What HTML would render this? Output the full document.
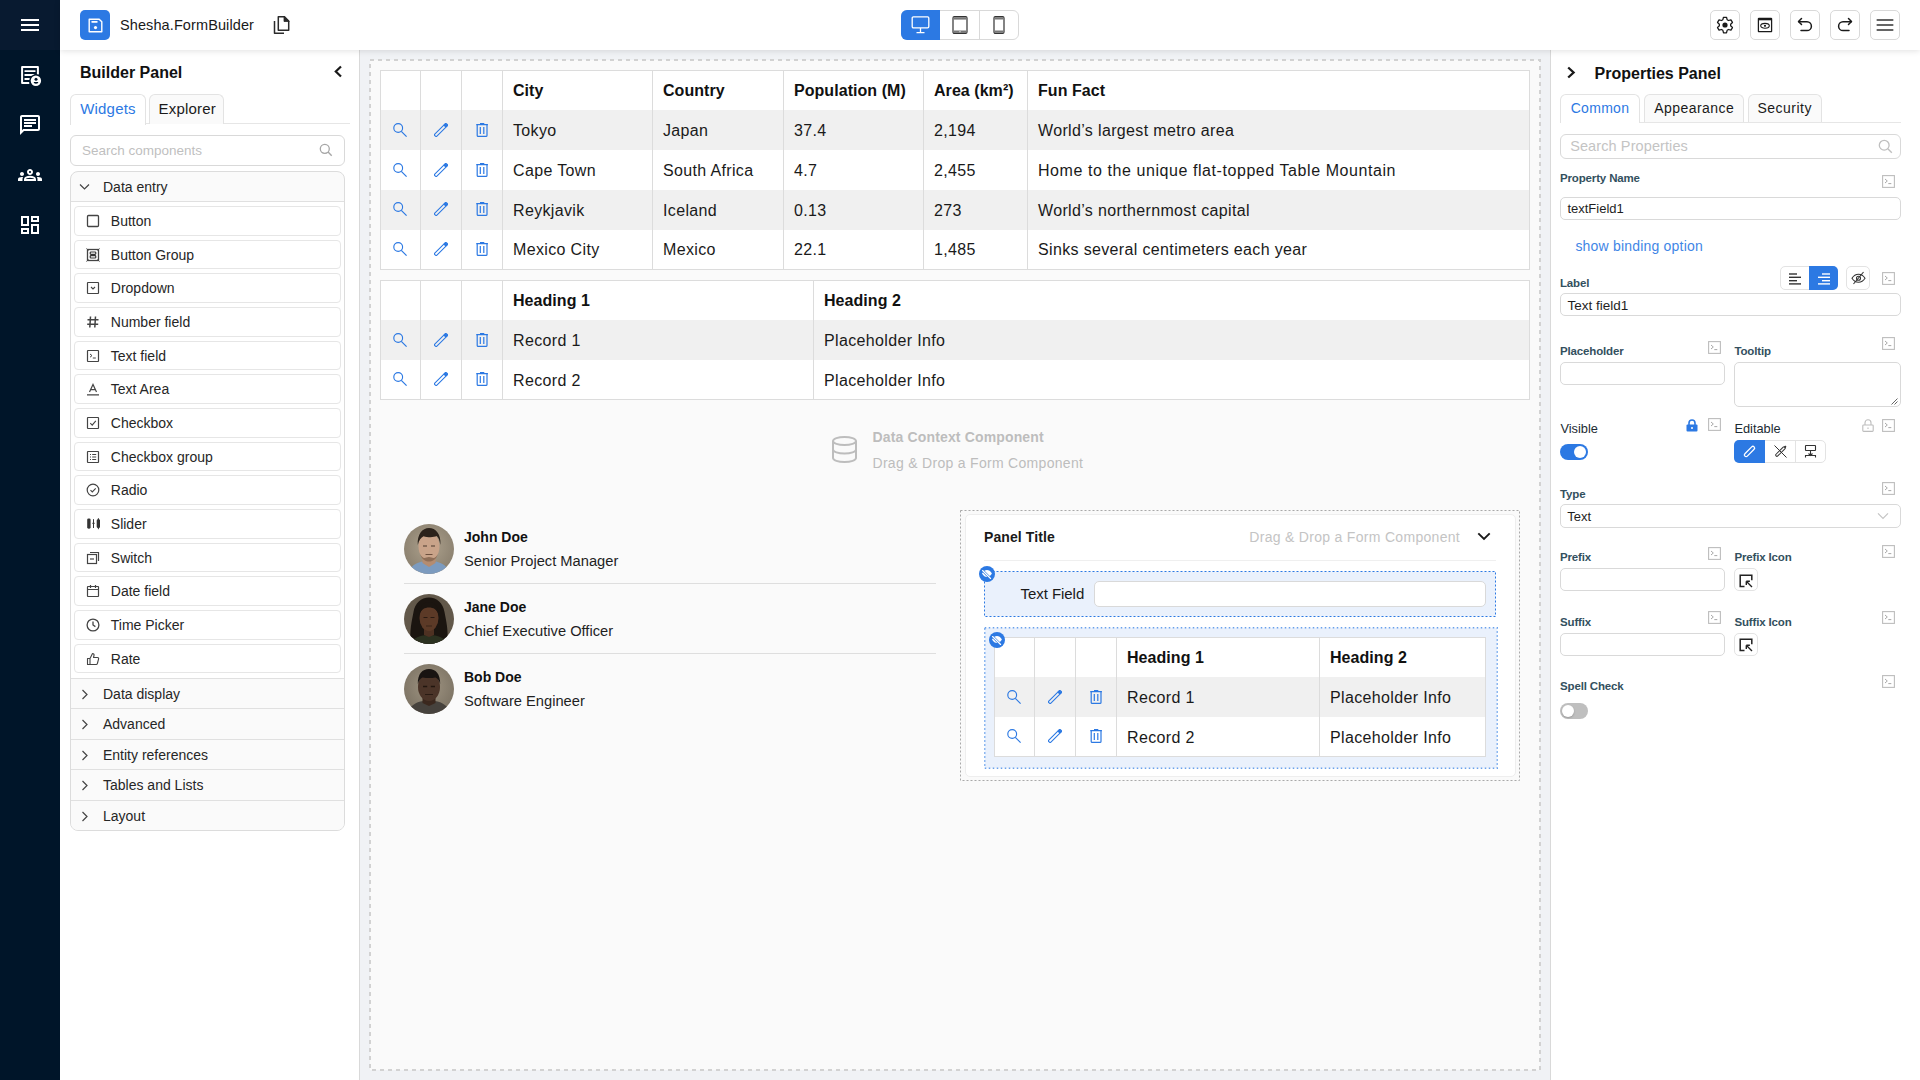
<!DOCTYPE html>
<html><head><meta charset="utf-8">
<style>
*{box-sizing:border-box;margin:0;padding:0}
html,body{width:1920px;height:1080px;overflow:hidden;background:#fff;font-family:"Liberation Sans",sans-serif;color:#1f1f1f}
.abs{position:absolute}
svg{display:block}
/* nav */
#nav{position:absolute;left:0;top:0;width:60px;height:1080px;background:#001529}
#navtop{position:absolute;left:0;top:0;width:60px;height:50px;background:#081a30}
/* header */
#hdr{position:absolute;left:60px;top:0;width:1860px;height:50px;background:#fff;z-index:5;box-shadow:0 1px 6px rgba(0,0,0,0.12)}
.tb{position:absolute;top:10px;width:30px;height:30px;border:1px solid #d9d9d9;border-radius:5px;background:#fff}
.tb svg{position:absolute;left:50%;top:50%;transform:translate(-50%,-50%)}
/* builder */
#bp{position:absolute;left:60px;top:50px;width:300px;height:1030px;background:#fff;border-right:1px solid #d9d9d9}
.tab{position:absolute;top:44px;height:30px;border:1px solid #e3e3e3;border-bottom:none;border-radius:6px 6px 0 0;background:#fafafa;font-size:15px;line-height:28px;padding-left:10px}
.item{position:absolute;left:14px;width:267px;height:29.66px;border:1px solid #e6e6e6;border-radius:4px;background:#fff;font-size:14px;line-height:28.2px;padding-left:36.3px;color:#262626}
.item svg{position:absolute;left:11.3px;top:7px}
.grp{position:absolute;left:10px;width:275px;height:31px;border-top:1px solid #e0e0e0;font-size:14px;line-height:30px;padding-left:32px;color:#262626;background:#fafafa}
.grp svg{position:absolute;left:10px;top:10px}
/* canvas */
#cv{position:absolute;left:360px;top:50px;width:1190px;height:1030px;background:#f0f2f5}
#dz{position:absolute;left:10px;top:10px;width:1170px;height:1010px;border:2px dashed #d3d3d3;background:#fafafa}
table.t{position:absolute;border-collapse:collapse;background:#fff;font-size:16px;letter-spacing:0.35px;border:1px solid #dcdcdc}
table.t td,table.t th{border-style:solid;border-color:#dcdcdc;border-width:0 1px;height:39.8px;padding:2px 0 0 10px;text-align:left;white-space:nowrap;color:#1a1a1a}
table.t th{font-weight:bold;letter-spacing:0.05px;color:#111;padding-top:0.4px}
table.t tr.s td{background:#f0f0f0}
table.t td.ic{padding:0;text-align:center}
table.t td.ic svg{margin:0 auto;position:relative;top:-0.4px}
table.t td.ic:nth-child(1) svg{left:-1px}
table.t td.ic:nth-child(3) svg{left:0.7px}
/* props */
#pp{position:absolute;left:1550px;top:50px;width:370px;height:1030px;background:#fff;border-left:1px solid #d9d9d9}
.lbl{position:absolute;font-size:12px;font-weight:bold;color:#3b4d5c;letter-spacing:-0.2px}
.inp{position:absolute;border:1px solid #d9d9d9;border-radius:4px;background:#fff}
.ex{position:absolute;width:13px;height:13px;border:1px solid #c4c4c4;border-radius:1px}
.ex:after{content:"";position:absolute;left:2px;top:3px;width:3px;height:3px;border-right:1px solid #9a9a9a;border-bottom:1px solid #9a9a9a;transform:rotate(-45deg)}
.ex:before{content:"";position:absolute;left:6px;top:8px;width:4px;height:1px;background:#9a9a9a}
</style></head>
<body>
<div id="nav">
  <div id="navtop"></div>
  <svg class="abs" style="left:18px;top:13px" width="24" height="24" viewBox="0 0 24 24" fill="#fff"><path d="M3 18h18v-2H3v2zm0-5h18v-2H3v2zm0-7v2h18V6H3z"/></svg>
  <svg class="abs" style="left:18px;top:63px" width="24" height="24" viewBox="0 0 24 24"><path d="M11.3 19.9H4.1V3.9h15.8v7.6" fill="none" stroke="#fff" stroke-width="2" stroke-linejoin="round"/><path d="M7.2 8.1h9.6M7.2 12h8.4M7.2 16h4" stroke="#fff" stroke-width="1.8" stroke-linecap="round"/><circle cx="17.9" cy="17.75" r="6.6" fill="#001529"/><circle cx="17.9" cy="17.75" r="5.2" fill="#fff"/><circle cx="18" cy="16.2" r="1.5" fill="#001529"/><path d="M15.6 19.1h4.8a2.4 1.6 0 0 1-4.8 0z" fill="#001529"/></svg>
  <svg class="abs" style="left:18px;top:113px" width="24" height="24" viewBox="0 0 24 24" fill="#fff"><path d="M20 2H4c-1.1 0-1.99.9-1.99 2L2 22l4-4h14c1.1 0 2-.9 2-2V4c0-1.1-.9-2-2-2zm0 14H5.17L4 17.17V4h16v12zM6 12h8v2H6zm0-3h12v2H6zm0-3h12v2H6z"/></svg>
  <svg class="abs" style="left:18px;top:163px" width="24" height="24" viewBox="0 0 24 24" fill="#fff"><path d="M4 13c1.1 0 2-.9 2-2s-.9-2-2-2-2 .9-2 2 .9 2 2 2zm1.13 1.1c-.37-.06-.74-.1-1.13-.1-.99 0-1.93.21-2.78.58C.48 14.9 0 15.62 0 16.43V18h4.5v-1.61c0-.83.23-1.61.63-2.29zM20 13c1.1 0 2-.9 2-2s-.9-2-2-2-2 .9-2 2 .9 2 2 2zm4 3.43c0-.81-.48-1.53-1.22-1.85-.85-.37-1.79-.58-2.78-.58-.39 0-.76.04-1.13.1.4.68.63 1.46.63 2.29V18H24v-1.57zm-7.76-2.78c-1.17-.52-2.61-.9-4.240-.9-1.63 0-3.07.39-4.24.9C6.68 14.13 6 15.21 6 16.39V18h12v-1.61c0-1.18-.68-2.26-1.76-2.74zM8.07 16c.09-.23.13-.39.91-.69.97-.38 1.99-.56 3.02-.56s2.05.18 3.02.56c.77.3.81.46.91.69H8.07zM12 8c.55 0 1 .45 1 1s-.45 1-1 1-1-.45-1-1 .45-1 1-1m0-2c-1.66 0-3 1.34-3 3s1.34 3 3 3 3-1.34 3-3-1.34-3-3-3z"/></svg>
  <svg class="abs" style="left:18px;top:213px" width="24" height="24" viewBox="0 0 24 24" fill="#fff"><path d="M19 5v2h-4V5h4M9 5v6H5V5h4m10 8v6h-4v-6h4M9 17v2H5v-2h4M21 3h-8v6h8V3zM11 3H3v10h8V3zm10 8h-8v10h8V11zm-10 4H3v6h8v-6z"/></svg>
</div>
<div id="hdr">
  <div class="abs" style="left:20px;top:10px;width:30px;height:30px;background:#2c79e3;border-radius:5px">
    <svg class="abs" style="left:7.5px;top:7.5px" width="15" height="15" viewBox="0 0 15 15" fill="none" stroke="#fff" stroke-width="1.4"><path d="M1.2 1.2h10l2.6 2.6v10H1.2z" stroke-linejoin="round"/><rect x="3.5" y="3" width="6" height="1.8" fill="#fff" stroke="none" rx=".4"/><circle cx="7.5" cy="9.6" r="1.6" fill="#fff" stroke="none"/></svg>
  </div>
  <div class="abs" style="left:60px;top:16px;font-size:14.5px;line-height:18px;color:#1a1a1a;letter-spacing:0.1px">Shesha.FormBuilder</div>
  <svg class="abs" style="left:213px;top:15px" width="18" height="20" viewBox="0 0 18 20" fill="none" stroke="#2a2a2a" stroke-width="1.5" stroke-linejoin="round"><path d="M5.3 1.8h6.2l4.2 4.2v9.2H5.3z"/><path d="M11 1.3v5.2h5.2z" fill="#2a2a2a" stroke-width="0.8"/><path d="M1.5 6v12.3h9.5"/></svg>
  <!-- device toggle -->
  <div class="abs" style="left:841px;top:10px;width:118px;height:30px;border:1px solid #d9d9d9;border-radius:6px;background:#fff"></div>
  <div class="abs" style="left:841px;top:10px;width:39px;height:30px;background:#2c79e3;border-radius:6px 0 0 6px"></div>
  <div class="abs" style="left:919px;top:10px;width:1px;height:30px;background:#d9d9d9"></div>
  <svg class="abs" style="left:851px;top:16px" width="19" height="18" viewBox="0 0 19 18" fill="none" stroke="#fff" stroke-width="1.3"><rect x="1.2" y="0.8" width="16.6" height="11" rx="1.2"/><path d="M9.5 12v4.2M5.5 16.6h8"/></svg>
  <svg class="abs" style="left:892px;top:16px" width="16" height="18" viewBox="0 0 16 18"><rect x="1" y="0.6" width="14" height="16.8" rx="1.3" fill="none" stroke="#333" stroke-width="1.2"/><rect x="1.5" y="1.2" width="13" height="2.4" fill="#777"/><rect x="1.5" y="14.5" width="13" height="2.4" fill="#777"/><circle cx="8" cy="15.7" r=".6" fill="#fff"/></svg>
  <svg class="abs" style="left:933px;top:16px" width="12" height="18" viewBox="0 0 12 18"><rect x="1" y="0.6" width="10" height="16.8" rx="1.3" fill="none" stroke="#333" stroke-width="1.2"/><rect x="1.5" y="1.2" width="9" height="2.3" fill="#777"/><rect x="1.5" y="14.5" width="9" height="2.3" fill="#777"/></svg>
  <!-- right toolbar -->
  <div class="tb" style="left:1650px"><svg width="18" height="18" viewBox="0 0 18 18"><path d="M6.86 3.72 L7.49 1.25 L10.51 1.25 L11.14 3.72 L12.51 4.51 L14.96 3.82 L16.47 6.43 L14.64 8.21 L14.64 9.79 L16.47 11.57 L14.96 14.18 L12.51 13.49 L11.14 14.28 L10.51 16.75 L7.49 16.75 L6.86 14.28 L5.49 13.49 L3.04 14.18 L1.53 11.57 L3.36 9.79 L3.36 8.21 L1.53 6.43 L3.04 3.82 L5.49 4.51Z" fill="none" stroke="#1a1a1a" stroke-width="1.25" stroke-linejoin="round"/><circle cx="9" cy="9" r="2.6" fill="#1a1a1a"/></svg></div>
  <div class="tb" style="left:1690px"><svg width="15" height="15" viewBox="0 0 15 15"><rect x=".8" y=".8" width="13.4" height="13.4" rx=".8" fill="none" stroke="#1a1a1a" stroke-width="1.5"/><rect x=".8" y=".8" width="13.4" height="2" fill="#1a1a1a"/><ellipse cx="7.5" cy="8.3" rx="4.3" ry="2.4" fill="none" stroke="#1a1a1a" stroke-width="1.1"/><circle cx="7.5" cy="8.3" r="1.1" fill="#1a1a1a"/></svg></div>
  <div class="tb" style="left:1730px"><svg width="16" height="16" viewBox="0 0 16 16" fill="none" stroke="#1a1a1a" stroke-width="1.5" stroke-linecap="round" stroke-linejoin="round"><path d="M4.5 1.5L1.5 4.5l3 3"/><path d="M1.8 4.8H10a4.4 4.4 0 0 1 0 8.8H4"/></svg></div>
  <div class="tb" style="left:1770px"><svg width="16" height="16" viewBox="0 0 16 16" fill="none" stroke="#1a1a1a" stroke-width="1.5" stroke-linecap="round" stroke-linejoin="round"><path d="M11.5 1.5l3 3-3 3"/><path d="M14.2 4.8H6a4.4 4.4 0 0 0 0 8.8h6"/></svg></div>
  <div class="tb" style="left:1810px"><svg width="18" height="14" viewBox="0 0 18 14" fill="#333"><rect x=".5" y="1.2" width="17" height="1.5" rx=".6"/><rect x=".5" y="6.2" width="17" height="1.5" rx=".6"/><rect x=".5" y="11.2" width="17" height="1.5" rx=".6"/></svg></div>
</div>
<div id="bp">
<div class="abs" style="left:20px;top:14px;font-size:16px;font-weight:bold;line-height:18px;color:#111">Builder Panel</div>
<svg class="abs" style="left:273px;top:15.2px" width="10" height="13" viewBox="0 0 10 13"><path d="M8 1.5L2.8 6.5 8 11.5" fill="none" stroke="#1a1a1a" stroke-width="2.2"/></svg>
<div class="abs" style="left:10px;top:73px;width:280px;height:1px;background:#e6e6e6"></div>
<div class="tab" style="left:10px;width:75.7px;background:#fff;color:#2c79e3;height:31px;padding-left:9.2px;letter-spacing:0.2px">Widgets</div>
<div class="tab" style="left:88.5px;width:75.1px;color:#1a1a1a;padding-left:9px;letter-spacing:0.2px">Explorer</div>
<div class="abs" style="left:10px;top:84.5px;width:275px;height:31px;border:1px solid #d9d9d9;border-radius:6px;background:#fff"></div>
<div class="abs" style="left:22px;top:93px;font-size:13.5px;line-height:16px;color:#bfbfbf">Search components</div>
<svg class="abs" style="left:259px;top:93px" width="14" height="14" viewBox="0 0 14 14"><circle cx="5.8" cy="5.8" r="4.5" fill="none" stroke="#a6a6a6" stroke-width="1.3"/><path d="M9.1 9.1l3.6 3.6" stroke="#a6a6a6" stroke-width="1.4"/></svg>
<div class="abs" style="left:10px;top:120.5px;width:275px;height:660px;border:1px solid #dcdcdc;border-radius:8px;background:#fafafa;overflow:hidden">
<div class="abs" style="left:0;top:0;width:275px;height:30px;"></div>
<svg class="abs" style="left:8px;top:11px" width="11" height="8" viewBox="0 0 11 8"><path d="M1 1.5l4.5 4.5L10 1.5" fill="none" stroke="#444" stroke-width="1.2"/></svg>
<div class="abs" style="left:32px;top:7px;font-size:14px;line-height:16px;color:#262626">Data entry</div>
<div class="abs" style="left:0;top:29.5px;width:275px;height:476.5px;background:#fff;border-top:1px solid #e0e0e0"></div>
<div class="item" style="left:2.5px;top:34.50px">Button<svg width="14" height="14" viewBox="0 0 14 14" style="left:11.3px;top:7px"><rect x="1.5" y="1.5" width="11" height="11" rx="1" fill="none" stroke="#444" stroke-width="1.3"/></svg></div>
<div class="item" style="left:2.5px;top:68.16px">Button Group<svg width="14" height="14" viewBox="0 0 14 14" style="left:11.3px;top:7px"><rect x="1.5" y="1.5" width="11" height="11" fill="none" stroke="#444" stroke-width="1.3"/><rect x="4.2" y="4" width="5.6" height="2.3" rx=".8" fill="none" stroke="#333" stroke-width="1.2"/><rect x="4.2" y="7.7" width="5.6" height="2.3" rx=".8" fill="none" stroke="#333" stroke-width="1.2"/><path d="M.5 .5l2 2M13.5 .5l-2 2M.5 13.5l2-2M13.5 13.5l-2-2" stroke="#444" stroke-width="1"/></svg></div>
<div class="item" style="left:2.5px;top:101.82px">Dropdown<svg width="14" height="14" viewBox="0 0 14 14" style="left:11.3px;top:7px"><rect x="1.5" y="1.5" width="11" height="11" rx=".5" fill="none" stroke="#444" stroke-width="1.2"/><path d="M5 6l2 2 2-2" fill="none" stroke="#444" stroke-width="1.1"/></svg></div>
<div class="item" style="left:2.5px;top:135.48px">Number field<svg width="14" height="14" viewBox="0 0 14 14" style="left:11.3px;top:7px"><path d="M4.5 1.5l-.7 11M9.5 1.5l-.7 11M1.5 4.8h11M1.2 9.2h11" stroke="#444" stroke-width="1.5" fill="none"/></svg></div>
<div class="item" style="left:2.5px;top:169.14px">Text field<svg width="14" height="14" viewBox="0 0 14 14" style="left:11.3px;top:7px"><rect x="1.5" y="1.5" width="11" height="11" rx=".5" fill="none" stroke="#444" stroke-width="1.2"/><path d="M4 5l2 1.6L4 8.2M6.8 9h3" fill="none" stroke="#444" stroke-width="1"/></svg></div>
<div class="item" style="left:2.5px;top:202.80px">Text Area<svg width="14" height="14" viewBox="0 0 14 14" style="left:11.3px;top:7px"><path d="M3.5 10L7 2.5 10.5 10M4.6 7.6h4.8M1 12.8h12" fill="none" stroke="#444" stroke-width="1.2"/></svg></div>
<div class="item" style="left:2.5px;top:236.46px">Checkbox<svg width="14" height="14" viewBox="0 0 14 14" style="left:11.3px;top:7px"><rect x="1.5" y="1.5" width="11" height="11" rx=".5" fill="none" stroke="#444" stroke-width="1.2"/><path d="M4.3 7.2l1.9 1.9 3.6-4.2" fill="none" stroke="#444" stroke-width="1.1"/></svg></div>
<div class="item" style="left:2.5px;top:270.12px">Checkbox group<svg width="14" height="14" viewBox="0 0 14 14" style="left:11.3px;top:7px"><rect x="1.5" y="1.5" width="11" height="11" rx=".5" fill="none" stroke="#444" stroke-width="1.2"/><path d="M4 4.5h1M4 7h1M4 9.5h1M6.2 4.5h4M6.2 7h4M6.2 9.5h4" stroke="#444" stroke-width="1"/></svg></div>
<div class="item" style="left:2.5px;top:303.78px">Radio<svg width="14" height="14" viewBox="0 0 14 14" style="left:11.3px;top:7px"><circle cx="7" cy="7" r="5.8" fill="none" stroke="#444" stroke-width="1.2"/><path d="M4.5 7.2l1.8 1.8 3.4-3.6" fill="none" stroke="#444" stroke-width="1.1"/></svg></div>
<div class="item" style="left:2.5px;top:337.44px">Slider<svg width="14" height="14" viewBox="0 0 14 14" style="left:11.3px;top:7px"><rect x="1.2" y="1.4" width="3.4" height="10.3" rx="1.4" fill="#333"/><path d="M7.5 2.2v8.8" stroke="#333" stroke-width="1"/><path d="M7.5 4.9l1.3 1.4-1.3 1.4-1.3-1.4z" fill="#333"/><path d="M12.4 1.2v11" stroke="#333" stroke-width="1"/><rect x="10.7" y="2.3" width="3.4" height="8.8" rx="1.4" fill="#333"/></svg></div>
<div class="item" style="left:2.5px;top:371.10px">Switch<svg width="14" height="14" viewBox="0 0 14 14" style="left:11.3px;top:7px"><rect x="1.5" y="3.5" width="9" height="9" fill="none" stroke="#444" stroke-width="1.2"/><path d="M4 1.5h8.5V10" fill="none" stroke="#444" stroke-width="1.2"/><path d="M4 8h4" stroke="#444" stroke-width="1.2"/></svg></div>
<div class="item" style="left:2.5px;top:404.76px">Date field<svg width="14" height="14" viewBox="0 0 14 14" style="left:11.3px;top:7px"><rect x="1.5" y="2.5" width="11" height="10" rx=".5" fill="none" stroke="#444" stroke-width="1.2"/><path d="M1.5 5.5h11M4.5 1v3M9.5 1v3" stroke="#444" stroke-width="1.2"/></svg></div>
<div class="item" style="left:2.5px;top:438.42px">Time Picker<svg width="14" height="14" viewBox="0 0 14 14" style="left:11.3px;top:7px"><circle cx="7" cy="7" r="5.9" fill="none" stroke="#444" stroke-width="1.3"/><path d="M7 3.5V7l2.4 1.6" fill="none" stroke="#444" stroke-width="1.3"/></svg></div>
<div class="item" style="left:2.5px;top:472.08px">Rate<svg width="14" height="14" viewBox="0 0 14 14" style="left:11.3px;top:7px"><path d="M1.5 6.5h2.5v6h-2.5zM4 6.5l2.5-5c1.2 0 1.8.8 1.5 2L7.5 5.5h4c.8 0 1.3.7 1.1 1.4l-1.2 4.6c-.2.6-.6 1-1.2 1H4" fill="none" stroke="#444" stroke-width="1.1" stroke-linejoin="round"/></svg></div>
<div class="grp" style="top:506.00px;left:0;width:275px">Data display<svg width="8" height="11" viewBox="0 0 8 11" style="left:10px;top:10px"><path d="M1.5 1l4.5 4.5L1.5 10" fill="none" stroke="#444" stroke-width="1.2"/></svg></div>
<div class="grp" style="top:536.65px;left:0;width:275px">Advanced<svg width="8" height="11" viewBox="0 0 8 11" style="left:10px;top:10px"><path d="M1.5 1l4.5 4.5L1.5 10" fill="none" stroke="#444" stroke-width="1.2"/></svg></div>
<div class="grp" style="top:567.30px;left:0;width:275px">Entity references<svg width="8" height="11" viewBox="0 0 8 11" style="left:10px;top:10px"><path d="M1.5 1l4.5 4.5L1.5 10" fill="none" stroke="#444" stroke-width="1.2"/></svg></div>
<div class="grp" style="top:597.95px;left:0;width:275px">Tables and Lists<svg width="8" height="11" viewBox="0 0 8 11" style="left:10px;top:10px"><path d="M1.5 1l4.5 4.5L1.5 10" fill="none" stroke="#444" stroke-width="1.2"/></svg></div>
<div class="grp" style="top:628.60px;left:0;width:275px">Layout<svg width="8" height="11" viewBox="0 0 8 11" style="left:10px;top:10px"><path d="M1.5 1l4.5 4.5L1.5 10" fill="none" stroke="#444" stroke-width="1.2"/></svg></div>
</div>
</div>
<div id="cv">
<svg class="abs" style="left:9px;top:9px" width="1172" height="1012"><rect x="1" y="1" width="1170" height="1010" fill="#fafafa" stroke="#d2d2d2" stroke-width="2" stroke-dasharray="4 4"/></svg>
<table class="t" style="left:20px;top:20px;width:1150px;table-layout:fixed">
<colgroup><col style="width:40px"><col style="width:41px"><col style="width:41px"><col style="width:150px"><col style="width:131px"><col style="width:140px"><col style="width:104px"><col></colgroup>
<tr><th></th><th></th><th></th><th>City</th><th>Country</th><th>Population (M)</th><th>Area (km²)</th><th>Fun Fact</th></tr>
<tr class="s"><td class="ic"><svg width="14" height="14" viewBox="0 0 14 14"><circle cx="5.2" cy="5" r="4.4" fill="none" stroke="#2c79e3" stroke-width="1.15"/><path d="M8.3 8.3l5.3 5.3" stroke="#2c79e3" stroke-width="1.2"/></svg></td><td class="ic"><svg width="14" height="14" viewBox="0 0 14 14"><g transform="rotate(-45 7 7)"><rect x="-1.3" y="5.5" width="16.6" height="3" rx="1" fill="none" stroke="#2c79e3" stroke-width="1.1"/><rect x="12" y="5.2" width="3.2" height="3.6" rx="1" fill="#2c79e3"/></g></svg></td><td class="ic"><svg width="14" height="14" viewBox="0 0 14 14" fill="none" stroke="#2c79e3" stroke-width="1.2"><path d="M0.3 1.6h11.6M4 .7h4.3"/><path d="M1.2 1.6v10.8c0 .6.4 1 1 1h7.8c.6 0 1-.4 1-1V1.6"/><path d="M4.3 4v7M7.8 4v7"/></svg></td><td>Tokyo</td><td>Japan</td><td>37.4</td><td>2,194</td><td>World’s largest metro area</td></tr>
<tr><td class="ic"><svg width="14" height="14" viewBox="0 0 14 14"><circle cx="5.2" cy="5" r="4.4" fill="none" stroke="#2c79e3" stroke-width="1.15"/><path d="M8.3 8.3l5.3 5.3" stroke="#2c79e3" stroke-width="1.2"/></svg></td><td class="ic"><svg width="14" height="14" viewBox="0 0 14 14"><g transform="rotate(-45 7 7)"><rect x="-1.3" y="5.5" width="16.6" height="3" rx="1" fill="none" stroke="#2c79e3" stroke-width="1.1"/><rect x="12" y="5.2" width="3.2" height="3.6" rx="1" fill="#2c79e3"/></g></svg></td><td class="ic"><svg width="14" height="14" viewBox="0 0 14 14" fill="none" stroke="#2c79e3" stroke-width="1.2"><path d="M0.3 1.6h11.6M4 .7h4.3"/><path d="M1.2 1.6v10.8c0 .6.4 1 1 1h7.8c.6 0 1-.4 1-1V1.6"/><path d="M4.3 4v7M7.8 4v7"/></svg></td><td>Cape Town</td><td>South Africa</td><td>4.7</td><td>2,455</td><td style="letter-spacing:0.57px">Home to the unique flat-topped Table Mountain</td></tr>
<tr class="s"><td class="ic"><svg width="14" height="14" viewBox="0 0 14 14"><circle cx="5.2" cy="5" r="4.4" fill="none" stroke="#2c79e3" stroke-width="1.15"/><path d="M8.3 8.3l5.3 5.3" stroke="#2c79e3" stroke-width="1.2"/></svg></td><td class="ic"><svg width="14" height="14" viewBox="0 0 14 14"><g transform="rotate(-45 7 7)"><rect x="-1.3" y="5.5" width="16.6" height="3" rx="1" fill="none" stroke="#2c79e3" stroke-width="1.1"/><rect x="12" y="5.2" width="3.2" height="3.6" rx="1" fill="#2c79e3"/></g></svg></td><td class="ic"><svg width="14" height="14" viewBox="0 0 14 14" fill="none" stroke="#2c79e3" stroke-width="1.2"><path d="M0.3 1.6h11.6M4 .7h4.3"/><path d="M1.2 1.6v10.8c0 .6.4 1 1 1h7.8c.6 0 1-.4 1-1V1.6"/><path d="M4.3 4v7M7.8 4v7"/></svg></td><td>Reykjavik</td><td>Iceland</td><td>0.13</td><td>273</td><td>World’s northernmost capital</td></tr>
<tr><td class="ic"><svg width="14" height="14" viewBox="0 0 14 14"><circle cx="5.2" cy="5" r="4.4" fill="none" stroke="#2c79e3" stroke-width="1.15"/><path d="M8.3 8.3l5.3 5.3" stroke="#2c79e3" stroke-width="1.2"/></svg></td><td class="ic"><svg width="14" height="14" viewBox="0 0 14 14"><g transform="rotate(-45 7 7)"><rect x="-1.3" y="5.5" width="16.6" height="3" rx="1" fill="none" stroke="#2c79e3" stroke-width="1.1"/><rect x="12" y="5.2" width="3.2" height="3.6" rx="1" fill="#2c79e3"/></g></svg></td><td class="ic"><svg width="14" height="14" viewBox="0 0 14 14" fill="none" stroke="#2c79e3" stroke-width="1.2"><path d="M0.3 1.6h11.6M4 .7h4.3"/><path d="M1.2 1.6v10.8c0 .6.4 1 1 1h7.8c.6 0 1-.4 1-1V1.6"/><path d="M4.3 4v7M7.8 4v7"/></svg></td><td>Mexico City</td><td>Mexico</td><td>22.1</td><td>1,485</td><td>Sinks several centimeters each year</td></tr>
</table>
<table class="t" style="left:20px;top:230px;width:1150px;table-layout:fixed">
<colgroup><col style="width:40px"><col style="width:41px"><col style="width:41px"><col style="width:311px"><col></colgroup>
<tr><th></th><th></th><th></th><th>Heading 1</th><th>Heading 2</th></tr>
<tr class="s"><td class="ic"><svg width="14" height="14" viewBox="0 0 14 14"><circle cx="5.2" cy="5" r="4.4" fill="none" stroke="#2c79e3" stroke-width="1.15"/><path d="M8.3 8.3l5.3 5.3" stroke="#2c79e3" stroke-width="1.2"/></svg></td><td class="ic"><svg width="14" height="14" viewBox="0 0 14 14"><g transform="rotate(-45 7 7)"><rect x="-1.3" y="5.5" width="16.6" height="3" rx="1" fill="none" stroke="#2c79e3" stroke-width="1.1"/><rect x="12" y="5.2" width="3.2" height="3.6" rx="1" fill="#2c79e3"/></g></svg></td><td class="ic"><svg width="14" height="14" viewBox="0 0 14 14" fill="none" stroke="#2c79e3" stroke-width="1.2"><path d="M0.3 1.6h11.6M4 .7h4.3"/><path d="M1.2 1.6v10.8c0 .6.4 1 1 1h7.8c.6 0 1-.4 1-1V1.6"/><path d="M4.3 4v7M7.8 4v7"/></svg></td><td>Record 1</td><td>Placeholder Info</td></tr>
<tr><td class="ic"><svg width="14" height="14" viewBox="0 0 14 14"><circle cx="5.2" cy="5" r="4.4" fill="none" stroke="#2c79e3" stroke-width="1.15"/><path d="M8.3 8.3l5.3 5.3" stroke="#2c79e3" stroke-width="1.2"/></svg></td><td class="ic"><svg width="14" height="14" viewBox="0 0 14 14"><g transform="rotate(-45 7 7)"><rect x="-1.3" y="5.5" width="16.6" height="3" rx="1" fill="none" stroke="#2c79e3" stroke-width="1.1"/><rect x="12" y="5.2" width="3.2" height="3.6" rx="1" fill="#2c79e3"/></g></svg></td><td class="ic"><svg width="14" height="14" viewBox="0 0 14 14" fill="none" stroke="#2c79e3" stroke-width="1.2"><path d="M0.3 1.6h11.6M4 .7h4.3"/><path d="M1.2 1.6v10.8c0 .6.4 1 1 1h7.8c.6 0 1-.4 1-1V1.6"/><path d="M4.3 4v7M7.8 4v7"/></svg></td><td>Record 2</td><td>Placeholder Info</td></tr>
</table>
<svg class="abs" style="left:471px;top:386px" width="27" height="27" viewBox="0 0 27 27" fill="none" stroke="#bdbdbd" stroke-width="2"><ellipse cx="13.5" cy="5" rx="11.5" ry="4"/><path d="M2 5v17c0 2.2 5.1 4 11.5 4s11.5-1.8 11.5-4V5"/><path d="M2 13.5c0 2.2 5.1 4 11.5 4s11.5-1.8 11.5-4"/></svg>
<div class="abs" style="left:512.5px;top:379px;font-size:14px;font-weight:bold;line-height:16px;color:#bdbdbd;letter-spacing:0.15px">Data Context Component</div>
<div class="abs" style="left:512.5px;top:405px;font-size:14px;line-height:16px;color:#bdbdbd;letter-spacing:0.3px">Drag &amp; Drop a Form Component</div>
<div class="abs av0" style="left:44px;top:474px;width:50px;height:50px;border-radius:50%;overflow:hidden"><svg width="50" height="50" viewBox="0 0 50 50"><defs><radialGradient id="g0" cx="50%" cy="45%" r="65%"><stop offset="0" stop-color="#aea28e"/><stop offset="1" stop-color="#857b6a"/></radialGradient></defs><rect width="50" height="50" fill="url(#g0)"/><path d="M4 50c2-8 8-11 14-12.5l7 4 7-4c6 1.5 12 4.5 14 12.5z" fill="#7c9bbf"/><path d="M18.5 34h13v5l-6.5 4-6.5-4z" fill="#b58c70"/><ellipse cx="25" cy="22.5" rx="10.5" ry="14" fill="#c9a389"/><path d="M16 30c2 6 6 7.5 9 7.5s7-1.5 9-7.5c-1 2-3 4-4.5 4-1.5 0-2.5-1-4.5-1s-3 1-4.5 1c-1.5 0-3.5-2-4.5-4z" fill="#8f6e57"/><path d="M13.8 21c-.8-10.5 4.5-17 11.2-17s12.3 6 11.4 17c-.8-5-2-8-3.8-9-2.5 1.5-9 1.5-13 .2-2.5 1.3-4.8 4-5.8 8.8z" fill="#2b221b"/><path d="M19 22h4M27 22h4" stroke="#4d3a2e" stroke-width="1.2"/><path d="M21.5 30.5h7" stroke="#6d4f3d" stroke-width="1"/></svg></div>
<div class="abs" style="left:104px;top:479px;font-size:14px;font-weight:bold;line-height:16px;color:#111">John Doe</div>
<div class="abs" style="left:104px;top:503px;font-size:14.7px;line-height:17px;color:#1f1f1f">Senior Project Manager</div>
<div class="abs" style="left:44px;top:533px;width:532px;height:1px;background:#dedede"></div>
<div class="abs av1" style="left:44px;top:544px;width:50px;height:50px;border-radius:50%;overflow:hidden"><svg width="50" height="50" viewBox="0 0 50 50"><rect width="50" height="50" fill="#62584a"/><path d="M7 50c-2-12 1-24 2.5-32C11 9 17 3.5 25 3.5S39 9 40.5 18C42 26 45 38 43 50z" fill="#1b1510"/><path d="M6 50c3-6 10-9 19-9s16 3 19 9z" fill="#2b3120"/><path d="M20 35h10v6l-5 2-5-2z" fill="#4e3122"/><ellipse cx="25" cy="24" rx="9.5" ry="13" fill="#5c3a27"/><path d="M15.5 20c0-8 4-12 9.5-12s9.5 4 9.5 12c-2-4.5-5-6.5-9.5-6.5s-7.5 2-9.5 6.5z" fill="#1b1510"/><path d="M19.5 23.5h4M26.5 23.5h4" stroke="#2a1a12" stroke-width="1.2"/><path d="M22 32h6" stroke="#3a2418" stroke-width="1.1"/></svg></div>
<div class="abs" style="left:104px;top:549px;font-size:14px;font-weight:bold;line-height:16px;color:#111">Jane Doe</div>
<div class="abs" style="left:104px;top:573px;font-size:14.7px;line-height:17px;color:#1f1f1f">Chief Executive Officer</div>
<div class="abs" style="left:44px;top:603px;width:532px;height:1px;background:#dedede"></div>
<div class="abs av2" style="left:44px;top:614px;width:50px;height:50px;border-radius:50%;overflow:hidden"><svg width="50" height="50" viewBox="0 0 50 50"><defs><radialGradient id="g2" cx="50%" cy="45%" r="65%"><stop offset="0" stop-color="#a09583"/><stop offset="1" stop-color="#776e5f"/></radialGradient></defs><rect width="50" height="50" fill="url(#g2)"/><path d="M3 50c2-8 9-12 16-13l6 2 6-2c7 1 14 5 16 13z" fill="#46423d"/><path d="M18.5 33h13v6l-6.5 3-6.5-3z" fill="#3b281e"/><ellipse cx="25" cy="23" rx="11" ry="14" fill="#4b3428"/><path d="M13.8 20c-.2-10 4.5-15 11.2-15s11.4 5 11.2 15c-1.2-4-3-6-4.8-6.5-3.8.8-8.4.8-12.8 0-1.8.5-3.6 2.5-4.8 6.5z" fill="#181311"/><path d="M19 22.5h4.2M26.8 22.5h4.2" stroke="#22160f" stroke-width="1.3"/><path d="M21 30.5h8" stroke="#2a1b13" stroke-width="1.2"/></svg></div>
<div class="abs" style="left:104px;top:619px;font-size:14px;font-weight:bold;line-height:16px;color:#111">Bob Doe</div>
<div class="abs" style="left:104px;top:643px;font-size:14.7px;line-height:17px;color:#1f1f1f">Software Engineer</div>
<svg class="abs" style="left:600px;top:460px" width="560" height="271"><rect x="0.5" y="0.5" width="559" height="270" fill="none" stroke="#a9a9a9" stroke-width="1" stroke-dasharray="2 2"/></svg>
<div class="abs" style="left:604.5px;top:464px;width:551px;height:262.5px;border:1px solid #eeeeee;border-radius:5px;background:#fff"></div>
<div class="abs" style="left:624px;top:479.45px;font-size:14px;font-weight:bold;line-height:16px;color:#1a1a1a;letter-spacing:0.1px">Panel Title</div>
<div class="abs" style="left:690px;width:410px;text-align:right;top:479.45px;font-size:14px;line-height:16px;color:#c4c4c4;letter-spacing:0.3px">Drag &amp; Drop a Form Component</div>
<svg class="abs" style="left:1116.5px;top:481.5px" width="14" height="9" viewBox="0 0 14 9"><path d="M1.3 1.3L7 7l5.7-5.7" fill="none" stroke="#1a1a1a" stroke-width="1.9"/></svg>
<div class="abs" style="left:624px;top:510px;width:512px;height:1px;background:#efefef"></div>
<svg class="abs" style="left:624px;top:521px" width="512" height="46"><rect x="0.5" y="0.5" width="511" height="45" fill="#eaf1fc" stroke="#2c79e3" stroke-width="1" stroke-dasharray="2 2"/></svg>
<div class="abs" style="left:660.5px;top:534.60px;font-size:15px;line-height:18px;color:#1a1a1a;letter-spacing:-0.05px">Text Field</div>
<div class="abs" style="left:734px;top:531px;width:392px;height:26px;border:1px solid #d9d9d9;border-radius:5px;background:#fff"></div>
<div class="abs" style="left:619px;top:516px;width:16px;height:16px"><svg width="16" height="16" viewBox="0 0 16 16"><circle cx="8" cy="8" r="8" fill="#2c79e3"/><path d="M3 7.5C4.4 5 6.2 4 8 4s3.6 1 4.9 3.5C11.6 10 9.8 11 8 11S4.4 10 3 7.5z" fill="#fff"/><circle cx="7" cy="8.3" r="1" fill="#2c79e3"/><path d="M3.4 4.3l8.3 8.3" stroke="#2c79e3" stroke-width="2.4"/><path d="M3.6 4.5l8 8" stroke="#fff" stroke-width="1.1" stroke-linecap="round"/></svg></div>
<svg class="abs" style="left:623.5px;top:576.5px" width="514" height="142"><rect x="0.75" y="0.75" width="512.5" height="140.5" fill="#eaf1fc" stroke="#6aa1ec" stroke-width="1.5" stroke-dasharray="1.5 2.5"/></svg>
<table class="t" style="left:634px;top:587px;width:492px;table-layout:fixed">
<colgroup><col style="width:40px"><col style="width:41px"><col style="width:41px"><col style="width:203px"><col></colgroup>
<tr><th></th><th></th><th></th><th>Heading 1</th><th>Heading 2</th></tr>
<tr class="s"><td class="ic"><svg width="14" height="14" viewBox="0 0 14 14"><circle cx="5.2" cy="5" r="4.4" fill="none" stroke="#2c79e3" stroke-width="1.15"/><path d="M8.3 8.3l5.3 5.3" stroke="#2c79e3" stroke-width="1.2"/></svg></td><td class="ic"><svg width="14" height="14" viewBox="0 0 14 14"><g transform="rotate(-45 7 7)"><rect x="-1.3" y="5.5" width="16.6" height="3" rx="1" fill="none" stroke="#2c79e3" stroke-width="1.1"/><rect x="12" y="5.2" width="3.2" height="3.6" rx="1" fill="#2c79e3"/></g></svg></td><td class="ic"><svg width="14" height="14" viewBox="0 0 14 14" fill="none" stroke="#2c79e3" stroke-width="1.2"><path d="M0.3 1.6h11.6M4 .7h4.3"/><path d="M1.2 1.6v10.8c0 .6.4 1 1 1h7.8c.6 0 1-.4 1-1V1.6"/><path d="M4.3 4v7M7.8 4v7"/></svg></td><td>Record 1</td><td>Placeholder Info</td></tr>
<tr><td class="ic"><svg width="14" height="14" viewBox="0 0 14 14"><circle cx="5.2" cy="5" r="4.4" fill="none" stroke="#2c79e3" stroke-width="1.15"/><path d="M8.3 8.3l5.3 5.3" stroke="#2c79e3" stroke-width="1.2"/></svg></td><td class="ic"><svg width="14" height="14" viewBox="0 0 14 14"><g transform="rotate(-45 7 7)"><rect x="-1.3" y="5.5" width="16.6" height="3" rx="1" fill="none" stroke="#2c79e3" stroke-width="1.1"/><rect x="12" y="5.2" width="3.2" height="3.6" rx="1" fill="#2c79e3"/></g></svg></td><td class="ic"><svg width="14" height="14" viewBox="0 0 14 14" fill="none" stroke="#2c79e3" stroke-width="1.2"><path d="M0.3 1.6h11.6M4 .7h4.3"/><path d="M1.2 1.6v10.8c0 .6.4 1 1 1h7.8c.6 0 1-.4 1-1V1.6"/><path d="M4.3 4v7M7.8 4v7"/></svg></td><td>Record 2</td><td>Placeholder Info</td></tr>
</table>
<div class="abs" style="left:629px;top:582px;width:16px;height:16px"><svg width="16" height="16" viewBox="0 0 16 16"><circle cx="8" cy="8" r="8" fill="#2c79e3"/><path d="M3 7.5C4.4 5 6.2 4 8 4s3.6 1 4.9 3.5C11.6 10 9.8 11 8 11S4.4 10 3 7.5z" fill="#fff"/><circle cx="7" cy="8.3" r="1" fill="#2c79e3"/><path d="M3.4 4.3l8.3 8.3" stroke="#2c79e3" stroke-width="2.4"/><path d="M3.6 4.5l8 8" stroke="#fff" stroke-width="1.1" stroke-linecap="round"/></svg></div>
</div>
<div id="pp"><div class="abs" style="left:-1px;top:0;width:370px;height:1030px">
<svg class="abs" style="left:16.00px;top:15.50px" width="11" height="13" viewBox="0 0 11 13"><path d="M2.2 1.5L7.6 6.5 2.2 11.5" fill="none" stroke="#1a1a1a" stroke-width="2.3"/></svg>
<div class="abs" style="left:44.60px;top:14.76px;font-size:16px;line-height:18px;white-space:nowrap;font-weight:bold;color:#111">Properties Panel</div>
<div class="abs" style="left:10.00px;top:72.00px;width:341.00px;height:1.00px;background:#e6e6e6"></div>
<div class="abs" style="left:10.40px;top:44.00px;width:79.80px;height:29.00px;border:1px solid #e3e3e3;border-bottom:none;border-radius:6px 6px 0 0;background:#fff"></div>
<div class="abs" style="left:93.90px;top:44.00px;width:100.60px;height:28.00px;border:1px solid #e3e3e3;border-bottom:none;border-radius:6px 6px 0 0;background:#fafafa"></div>
<div class="abs" style="left:197.60px;top:44.00px;width:74.60px;height:28.00px;border:1px solid #e3e3e3;border-bottom:none;border-radius:6px 6px 0 0;background:#fafafa"></div>
<div class="abs" style="left:20.70px;top:50.45px;font-size:14px;line-height:16px;white-space:nowrap;color:#2c79e3;letter-spacing:0.3px">Common</div>
<div class="abs" style="left:104.20px;top:50.45px;font-size:14px;line-height:16px;white-space:nowrap;color:#1a1a1a;letter-spacing:0.45px">Appearance</div>
<div class="abs" style="left:207.40px;top:50.45px;font-size:14px;line-height:16px;white-space:nowrap;color:#1a1a1a;letter-spacing:0.5px">Security</div>
<div class="abs" style="left:10.40px;top:83.50px;width:341.10px;height:25.00px;border:1px solid #d9d9d9;border-radius:6px;background:#fff"></div>
<div class="abs" style="left:20.20px;top:87.68px;font-size:14.5px;line-height:17px;white-space:nowrap;color:#c4c4c4;letter-spacing:0.1px">Search Properties</div>
<svg class="abs" style="left:327.50px;top:88.50px" width="15" height="15" viewBox="0 0 15 15"><circle cx="6.2" cy="6.2" r="4.9" fill="none" stroke="#bfbfbf" stroke-width="1.3"/><path d="M9.8 9.8l4 4" stroke="#bfbfbf" stroke-width="1.4"/></svg>
<div class="abs" style="left:10.00px;top:121.42px;font-size:11.5px;line-height:14px;white-space:nowrap;font-weight:bold;color:#33505e;letter-spacing:-0.15px">Property Name</div>
<svg class="abs" style="left:332.00px;top:125.20px" width="13" height="13" viewBox="0 0 13 13"><rect x=".6" y=".6" width="11.8" height="11.8" fill="#fff" stroke="#bdbdbd" stroke-width="1.1"/><path d="M3 4l2.3 2L3 8" fill="none" stroke="#9e9e9e" stroke-width=".9"/><path d="M6.3 8.6h3" stroke="#9e9e9e" stroke-width=".9"/></svg>
<div class="abs" style="left:10.40px;top:146.50px;width:341.10px;height:23.50px;border:1px solid #d9d9d9;border-radius:5px;background:#fff"></div>
<div class="abs" style="left:17.40px;top:151.10px;font-size:13px;line-height:16px;white-space:nowrap;color:#1f1f1f">textField1</div>
<div class="abs" style="left:25.40px;top:188.15px;font-size:14px;line-height:16px;white-space:nowrap;color:#3f86e6;letter-spacing:0.2px">show binding option</div>
<div class="abs" style="left:10.00px;top:225.52px;font-size:11.5px;line-height:14px;white-space:nowrap;font-weight:bold;color:#33505e;letter-spacing:-0.15px">Label</div>
<div class="abs" style="left:230.20px;top:216.00px;width:57.80px;height:24.00px;border:1px solid #e3e3e3;border-radius:5px;background:#fff"></div>
<div class="abs" style="left:258.50px;top:216.00px;width:29.50px;height:24.00px;background:#2c79e3;border-radius:0 5px 5px 0"></div>
<svg class="abs" style="left:238.00px;top:221.00px" width="14" height="14" viewBox="0 0 14 14" fill="#333"><rect x="1" y="2.3" width="8" height="1.4"/><rect x="1" y="5.6" width="12" height="1.4"/><rect x="1" y="9" width="8" height="1.4"/><rect x="1" y="12.2" width="12" height="1.4"/></svg>
<svg class="abs" style="left:266.50px;top:221.00px" width="14" height="14" viewBox="0 0 14 14" fill="#fff"><rect x="5" y="2.3" width="8" height="1.4"/><rect x="1" y="5.6" width="12" height="1.4"/><rect x="5" y="9" width="8" height="1.4"/><rect x="1" y="12.2" width="12" height="1.4"/></svg>
<div class="abs" style="left:296.30px;top:216.00px;width:23.90px;height:24.00px;border:1px solid #e3e3e3;border-radius:5px;background:#fff"></div>
<svg class="abs" style="left:301.00px;top:221.00px" width="15" height="14" viewBox="0 0 15 14" fill="none" stroke="#333" stroke-width="1.1"><path d="M1 7.2c1.6-2.6 3.8-4 6.5-4s4.9 1.4 6.5 4c-1.6 2.6-3.8 4-6.5 4S2.6 9.8 1 7.2z"/><circle cx="7.5" cy="7.2" r="2"/><path d="M12.5 1L2.5 13"/></svg>
<svg class="abs" style="left:332.00px;top:221.70px" width="13" height="13" viewBox="0 0 13 13"><rect x=".6" y=".6" width="11.8" height="11.8" fill="#fff" stroke="#bdbdbd" stroke-width="1.1"/><path d="M3 4l2.3 2L3 8" fill="none" stroke="#9e9e9e" stroke-width=".9"/><path d="M6.3 8.6h3" stroke="#9e9e9e" stroke-width=".9"/></svg>
<div class="abs" style="left:10.40px;top:243.20px;width:341.10px;height:23.30px;border:1px solid #d9d9d9;border-radius:5px;background:#fff"></div>
<div class="abs" style="left:17.40px;top:247.72px;font-size:13.5px;line-height:16px;white-space:nowrap;color:#1f1f1f">Text field1</div>
<div class="abs" style="left:10.00px;top:294.02px;font-size:11.5px;line-height:14px;white-space:nowrap;font-weight:bold;color:#33505e;letter-spacing:-0.15px">Placeholder</div>
<svg class="abs" style="left:158.00px;top:291.20px" width="13" height="13" viewBox="0 0 13 13"><rect x=".6" y=".6" width="11.8" height="11.8" fill="#fff" stroke="#bdbdbd" stroke-width="1.1"/><path d="M3 4l2.3 2L3 8" fill="none" stroke="#9e9e9e" stroke-width=".9"/><path d="M6.3 8.6h3" stroke="#9e9e9e" stroke-width=".9"/></svg>
<div class="abs" style="left:184.40px;top:294.02px;font-size:11.5px;line-height:14px;white-space:nowrap;font-weight:bold;color:#33505e;letter-spacing:-0.15px">Tooltip</div>
<svg class="abs" style="left:332.00px;top:287.30px" width="13" height="13" viewBox="0 0 13 13"><rect x=".6" y=".6" width="11.8" height="11.8" fill="#fff" stroke="#bdbdbd" stroke-width="1.1"/><path d="M3 4l2.3 2L3 8" fill="none" stroke="#9e9e9e" stroke-width=".9"/><path d="M6.3 8.6h3" stroke="#9e9e9e" stroke-width=".9"/></svg>
<div class="abs" style="left:10.40px;top:312.40px;width:165.00px;height:23.10px;border:1px solid #d9d9d9;border-radius:5px;background:#fff"></div>
<div class="abs" style="left:184.40px;top:312.40px;width:167.00px;height:45.10px;border:1px solid #d9d9d9;border-radius:5px;background:#fff"></div>
<svg class="abs" style="left:341.00px;top:348.00px" width="7" height="7" viewBox="0 0 7 7" stroke="#555" stroke-width=".9"><path d="M.5 6.5l6-6M3.5 6.5l3-3"/></svg>
<div class="abs" style="left:10.40px;top:371.06px;font-size:12.8px;line-height:15px;white-space:nowrap;color:#1c2b33">Visible</div>
<svg class="abs" style="left:136.00px;top:368.50px" width="12" height="13" viewBox="0 0 12 13"><path d="M3 6V4a3 3 0 0 1 6 0v2" fill="none" stroke="#2c79e3" stroke-width="1.6"/><rect x=".5" y="5.5" width="11" height="7" rx="1" fill="#2c79e3"/><circle cx="6" cy="9" r="1" fill="#fff"/></svg>
<svg class="abs" style="left:158.00px;top:368.30px" width="13" height="13" viewBox="0 0 13 13"><rect x=".6" y=".6" width="11.8" height="11.8" fill="#fff" stroke="#bdbdbd" stroke-width="1.1"/><path d="M3 4l2.3 2L3 8" fill="none" stroke="#9e9e9e" stroke-width=".9"/><path d="M6.3 8.6h3" stroke="#9e9e9e" stroke-width=".9"/></svg>
<div class="abs" style="left:10.00px;top:394.10px;width:28.00px;height:16.00px;background:#2c79e3;border-radius:8px"></div>
<div class="abs" style="left:24.00px;top:396.10px;width:12.00px;height:12.00px;background:#fff;border-radius:50%"></div>
<div class="abs" style="left:184.40px;top:371.06px;font-size:12.8px;line-height:15px;white-space:nowrap;color:#1c2b33">Editable</div>
<svg class="abs" style="left:311.50px;top:369.00px" width="12" height="13" viewBox="0 0 12 13" fill="none" stroke="#bdbdbd" stroke-width="1.1"><path d="M3 6V3.8a3 3 0 0 1 6 0V6"/><rect x=".8" y="6" width="10.4" height="6.4" rx=".8"/><path d="M6 8.5v1.6"/></svg>
<svg class="abs" style="left:332.00px;top:369.00px" width="13" height="13" viewBox="0 0 13 13"><rect x=".6" y=".6" width="11.8" height="11.8" fill="#fff" stroke="#bdbdbd" stroke-width="1.1"/><path d="M3 4l2.3 2L3 8" fill="none" stroke="#9e9e9e" stroke-width=".9"/><path d="M6.3 8.6h3" stroke="#9e9e9e" stroke-width=".9"/></svg>
<div class="abs" style="left:184.00px;top:390.20px;width:91.60px;height:22.40px;border:1px solid #e3e3e3;border-radius:5px;background:#fff"></div>
<div class="abs" style="left:184.00px;top:390.20px;width:31.00px;height:22.40px;background:#2c79e3;border-radius:5px 0 0 5px"></div>
<div class="abs" style="left:244.50px;top:390.20px;width:1.00px;height:22.40px;background:#e3e3e3"></div>
<svg class="abs" style="left:192.00px;top:393.50px" width="15" height="15" viewBox="0 0 15 15"><g transform="rotate(-45 7.5 7.5)"><rect x="1" y="5.8" width="13" height="3.4" rx="1.7" fill="none" stroke="#fff" stroke-width="1.3"/></g></svg>
<svg class="abs" style="left:223.00px;top:393.50px" width="15" height="15" viewBox="0 0 15 15" fill="none" stroke="#333" stroke-width="1"><path d="M1.5 1.5l12 12"/><g transform="rotate(-45 7.5 7.5)"><rect x="1.2" y="6.3" width="12.5" height="2.4" rx="1.2"/></g><path d="M11.5 2.2l1.3 1.3" stroke-width="2"/></svg>
<svg class="abs" style="left:253.00px;top:393.50px" width="15" height="15" viewBox="0 0 15 15" fill="none" stroke="#333" stroke-width="1.1"><rect x="2.5" y="1.5" width="10" height="5" rx=".5"/><path d="M7.5 6.5v5M5.5 9.5l2 2 2-2M2.5 13.5v-2h10v2"/></svg>
<div class="abs" style="left:10.00px;top:436.72px;font-size:11.5px;line-height:14px;white-space:nowrap;font-weight:bold;color:#33505e;letter-spacing:-0.15px">Type</div>
<svg class="abs" style="left:332.00px;top:432.20px" width="13" height="13" viewBox="0 0 13 13"><rect x=".6" y=".6" width="11.8" height="11.8" fill="#fff" stroke="#bdbdbd" stroke-width="1.1"/><path d="M3 4l2.3 2L3 8" fill="none" stroke="#9e9e9e" stroke-width=".9"/><path d="M6.3 8.6h3" stroke="#9e9e9e" stroke-width=".9"/></svg>
<div class="abs" style="left:10.40px;top:454.00px;width:341.00px;height:23.50px;border:1px solid #d9d9d9;border-radius:5px;background:#fff"></div>
<div class="abs" style="left:17.30px;top:459.10px;font-size:13px;line-height:16px;white-space:nowrap;color:#1f1f1f">Text</div>
<svg class="abs" style="left:327.00px;top:461.50px" width="12" height="8" viewBox="0 0 12 8"><path d="M1 1.3l5 5 5-5" fill="none" stroke="#c4c4c4" stroke-width="1.2"/></svg>
<div class="abs" style="left:10.00px;top:500.42px;font-size:11.5px;line-height:14px;white-space:nowrap;font-weight:bold;color:#33505e;letter-spacing:-0.15px">Prefix</div>
<svg class="abs" style="left:158.00px;top:497.00px" width="13" height="13" viewBox="0 0 13 13"><rect x=".6" y=".6" width="11.8" height="11.8" fill="#fff" stroke="#bdbdbd" stroke-width="1.1"/><path d="M3 4l2.3 2L3 8" fill="none" stroke="#9e9e9e" stroke-width=".9"/><path d="M6.3 8.6h3" stroke="#9e9e9e" stroke-width=".9"/></svg>
<div class="abs" style="left:184.40px;top:500.42px;font-size:11.5px;line-height:14px;white-space:nowrap;font-weight:bold;color:#33505e;letter-spacing:-0.15px">Prefix Icon</div>
<svg class="abs" style="left:332.00px;top:495.00px" width="13" height="13" viewBox="0 0 13 13"><rect x=".6" y=".6" width="11.8" height="11.8" fill="#fff" stroke="#bdbdbd" stroke-width="1.1"/><path d="M3 4l2.3 2L3 8" fill="none" stroke="#9e9e9e" stroke-width=".9"/><path d="M6.3 8.6h3" stroke="#9e9e9e" stroke-width=".9"/></svg>
<div class="abs" style="left:10.40px;top:518.20px;width:165.00px;height:23.30px;border:1px solid #d9d9d9;border-radius:5px;background:#fff"></div>
<div class="abs" style="left:184.40px;top:518.20px;width:23.20px;height:23.30px;border:1px solid #e3e3e3;border-radius:5px;background:#fff"></div>
<svg class="abs" style="left:189.00px;top:523.70px" width="14" height="14" viewBox="0 0 14 14" fill="none" stroke="#222" stroke-width="1.5"><path d="M5.5 12.5h-4.3V1.2h11.6v5"/><path d="M7.5 7.5l5.5 5.5M7.3 7.3h3.6M7.3 7.3v3.6" stroke-width="1.4"/></svg>
<div class="abs" style="left:10.00px;top:564.82px;font-size:11.5px;line-height:14px;white-space:nowrap;font-weight:bold;color:#33505e;letter-spacing:-0.15px">Suffix</div>
<svg class="abs" style="left:158.00px;top:561.00px" width="13" height="13" viewBox="0 0 13 13"><rect x=".6" y=".6" width="11.8" height="11.8" fill="#fff" stroke="#bdbdbd" stroke-width="1.1"/><path d="M3 4l2.3 2L3 8" fill="none" stroke="#9e9e9e" stroke-width=".9"/><path d="M6.3 8.6h3" stroke="#9e9e9e" stroke-width=".9"/></svg>
<div class="abs" style="left:184.40px;top:564.82px;font-size:11.5px;line-height:14px;white-space:nowrap;font-weight:bold;color:#33505e;letter-spacing:-0.15px">Suffix Icon</div>
<svg class="abs" style="left:332.00px;top:561.00px" width="13" height="13" viewBox="0 0 13 13"><rect x=".6" y=".6" width="11.8" height="11.8" fill="#fff" stroke="#bdbdbd" stroke-width="1.1"/><path d="M3 4l2.3 2L3 8" fill="none" stroke="#9e9e9e" stroke-width=".9"/><path d="M6.3 8.6h3" stroke="#9e9e9e" stroke-width=".9"/></svg>
<div class="abs" style="left:10.40px;top:582.50px;width:165.00px;height:23.30px;border:1px solid #d9d9d9;border-radius:5px;background:#fff"></div>
<div class="abs" style="left:184.40px;top:582.50px;width:23.20px;height:23.30px;border:1px solid #e3e3e3;border-radius:5px;background:#fff"></div>
<svg class="abs" style="left:189.00px;top:588.00px" width="14" height="14" viewBox="0 0 14 14" fill="none" stroke="#222" stroke-width="1.5"><path d="M5.5 12.5h-4.3V1.2h11.6v5"/><path d="M7.5 7.5l5.5 5.5M7.3 7.3h3.6M7.3 7.3v3.6" stroke-width="1.4"/></svg>
<div class="abs" style="left:10.00px;top:629.02px;font-size:11.5px;line-height:14px;white-space:nowrap;font-weight:bold;color:#33505e;letter-spacing:-0.15px">Spell Check</div>
<svg class="abs" style="left:332.00px;top:625.00px" width="13" height="13" viewBox="0 0 13 13"><rect x=".6" y=".6" width="11.8" height="11.8" fill="#fff" stroke="#bdbdbd" stroke-width="1.1"/><path d="M3 4l2.3 2L3 8" fill="none" stroke="#9e9e9e" stroke-width=".9"/><path d="M6.3 8.6h3" stroke="#9e9e9e" stroke-width=".9"/></svg>
<div class="abs" style="left:10.00px;top:653.00px;width:28.00px;height:16.00px;background:#bfbfbf;border-radius:8px"></div>
<div class="abs" style="left:12.00px;top:655.00px;width:12.00px;height:12.00px;background:#fff;border-radius:50%;box-shadow:0 1px 2px rgba(0,0,0,.2)"></div>
</div></div>
</body></html>
